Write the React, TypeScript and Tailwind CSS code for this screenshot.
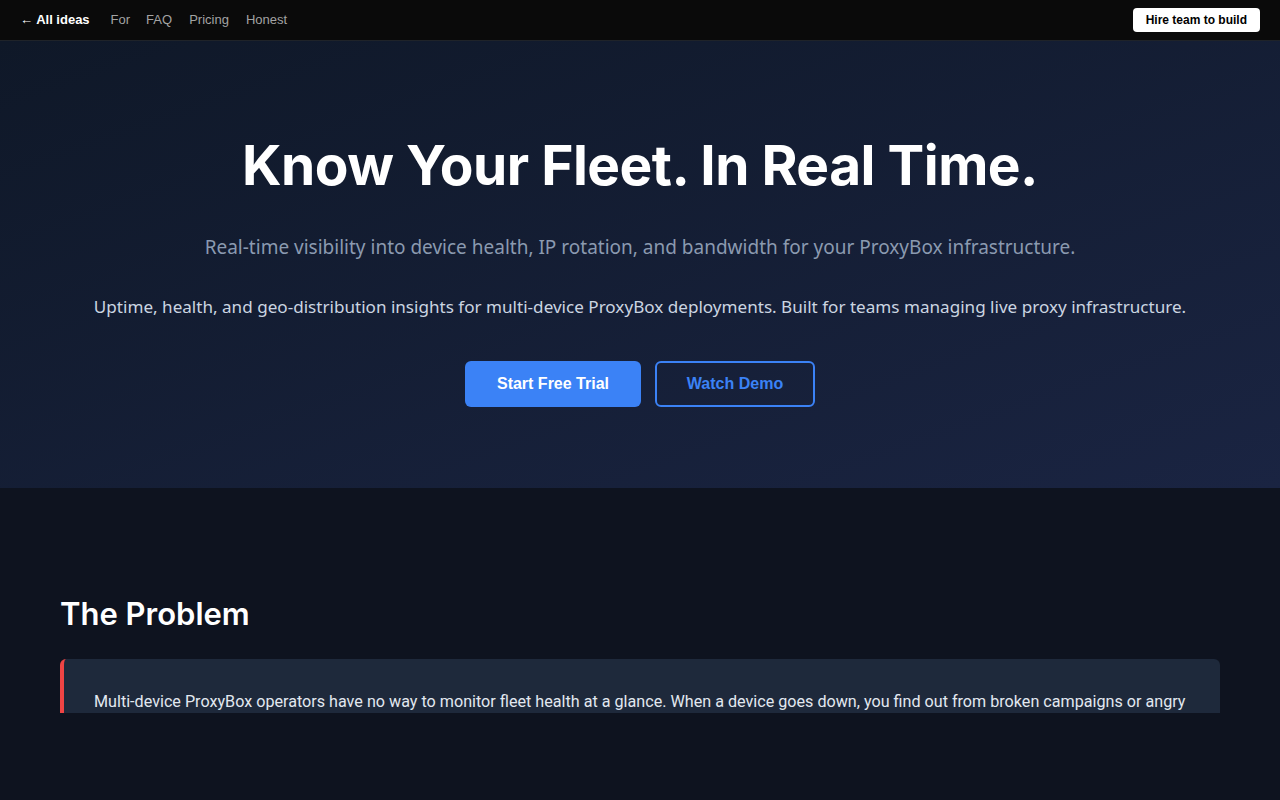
import React from "react";

const body = { fontFamily: '"Noto Sans", "Open Sans", sans-serif' };
const display = { fontFamily: 'Inter, "Noto Sans", sans-serif' };
const ui = { fontFamily: '"Liberation Sans", Arial, sans-serif' };
const card = { fontFamily: 'Roboto, "Noto Sans", sans-serif' };

export default function App() {
  return (
    <div className="min-h-[800px] bg-[#0e131f] text-white" style={body}>
      {/* top navigation */}
      <nav
        className="flex h-[41px] items-center justify-between border-b border-[#1f2329] bg-[#0a0a0a] pl-5 pr-5"
        style={ui}
      >
        <div className="flex items-center text-[13px]">
          <a className="font-bold text-white">← All ideas</a>
          <a className="ml-[21px] text-[#a3a3a3]">For</a>
          <a className="ml-[16px] text-[#a3a3a3]">FAQ</a>
          <a className="ml-[17px] text-[#a3a3a3]">Pricing</a>
          <a className="ml-[17px] text-[#a3a3a3]">Honest</a>
        </div>
        <button className="h-6 rounded-[4px] bg-white px-[13px] text-[12px] font-bold text-black">
          Hire team to build
        </button>
      </nav>

      {/* hero */}
      <section className="flex flex-col items-center bg-gradient-to-br from-[#0f1828] to-[#1a2442] px-6 pb-[81px] pt-[92px] text-center">
        <h1
          className="text-[55px] font-bold leading-[64px] tracking-[-0.5px] text-white"
          style={display}
        >
          Know Your Fleet. In Real Time.
        </h1>
        <p className="mt-[36px] text-[19px] leading-[28px] text-[#8b9ab0]">
          Real-time visibility into device health, IP rotation, and bandwidth for your ProxyBox infrastructure.
        </p>
        <p className="mt-[32px] text-[17.1px] leading-[28px] text-[#cbd5e1]">
          Uptime, health, and geo-distribution insights for multi-device ProxyBox deployments. Built for teams managing live proxy infrastructure.
        </p>
        <div className="mt-[40px] flex gap-[14px]" style={ui}>
          <button className="h-[46px] w-[176px] rounded-[6px] bg-[#3b82f6] text-[16px] font-bold text-white">
            Start Free Trial
          </button>
          <button className="h-[46px] w-[160px] rounded-[6px] border-2 border-[#3b82f6] text-[16px] font-bold text-[#3b82f6]">
            Watch Demo
          </button>
        </div>
      </section>

      {/* problem section */}
      <section className="px-[60px] pt-[106px]">
        <h2 className="text-[31px] font-semibold leading-[40px] text-white" style={display}>
          The Problem
        </h2>
        <div className="mt-[25px] h-[54px] overflow-hidden rounded-t-[6px] border-l-4 border-[#ef4444] bg-[#1e293b] pl-[30px] pr-[20px] pt-[29px]">
          <p className="whitespace-nowrap text-[16.15px] leading-[28px] text-[#e2e8f0]" style={card}>
            Multi-device ProxyBox operators have no way to monitor fleet health at a glance. When a device goes down, you find out from broken campaigns or angry
          </p>
        </div>
      </section>
    </div>
  );
}
